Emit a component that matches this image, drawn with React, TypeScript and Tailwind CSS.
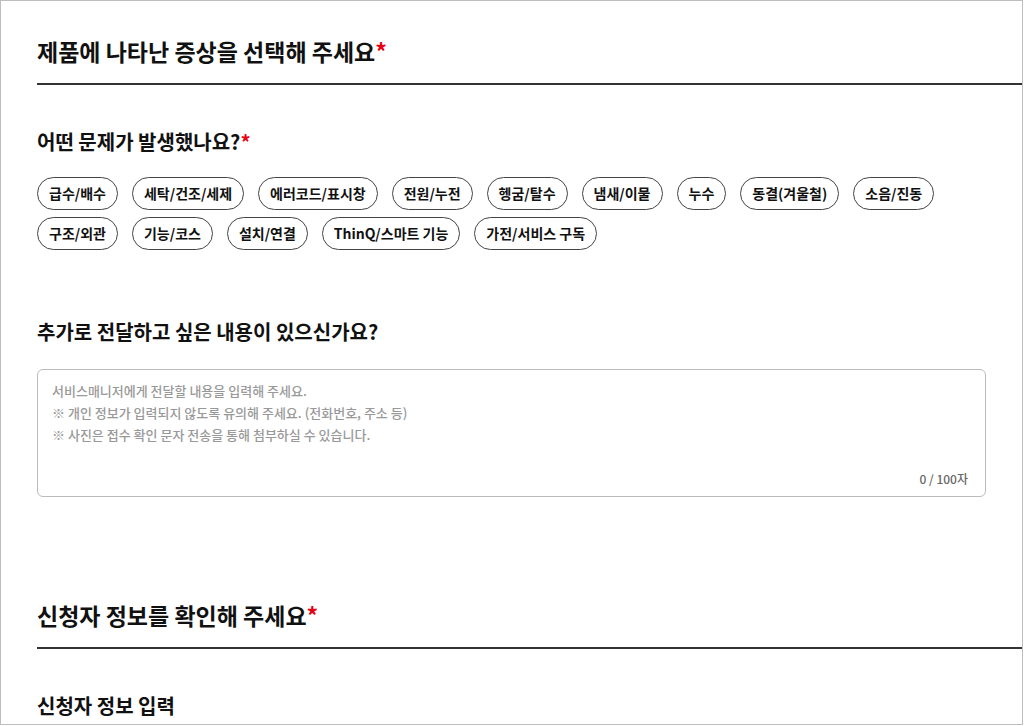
import React from "react";

const symptoms = [
  "급수/배수",
  "세탁/건조/세제",
  "에러코드/표시창",
  "전원/누전",
  "헹굼/탈수",
  "냄새/이물",
  "누수",
  "동결(겨울철)",
  "소음/진동",
  "구조/외관",
  "기능/코스",
  "설치/연결",
  "ThinQ/스마트 기능",
  "가전/서비스 구독",
];

function Star() {
  return <span className="text-[#e60012]">*</span>;
}

function SectionTitle({ children }: { children: React.ReactNode }) {
  return (
    <div className="border-b-2 border-[#333] pb-[17px]">
      <h2 className="text-[23px] leading-[30px] font-bold text-[#111]">
        {children}
        <Star />
      </h2>
    </div>
  );
}

function App() {
  return (
    <div
      className="w-[1023px] h-[725px] overflow-hidden border border-[#bdbdbd] bg-white pl-[36px] pt-[35px] text-[#111]"
      style={{ fontFamily: '"Noto Sans CJK KR", "Noto Sans", sans-serif' }}
    >
      <SectionTitle>제품에 나타난 증상을 선택해 주세요</SectionTitle>

      <section className="pr-[36px]">
        <h3 className="mt-[44px] text-[20px] leading-[26px] font-bold">
          어떤 문제가 발생했나요?
          <Star />
        </h3>
        <div className="mt-[22px] flex flex-wrap gap-x-[14px] gap-y-[7px]">
          {symptoms.map((s) => (
            <button
              key={s}
              className="rounded-full border border-[#444] bg-white px-[11px] py-[6px] text-[14px] leading-[19px] font-bold text-[#111]"
            >
              {s}
            </button>
          ))}
        </div>

        <h3 className="mt-[69px] text-[20px] leading-[26px] font-bold">
          추가로 전달하고 싶은 내용이 있으신가요?
        </h3>
        <div className="mt-[24px] h-[128px] rounded-[6px] border border-[#bbb] flex flex-col pl-[14px] pr-[17px] pt-[10px] pb-[8px]">
          <textarea
            className="flex-1 resize-none outline-none text-[13px] leading-[22px] font-medium text-[#333] placeholder:text-[#999]"
            placeholder={
              "서비스매니저에게 전달할 내용을 입력해 주세요.\n※ 개인 정보가 입력되지 않도록 유의해 주세요. (전화번호, 주소 등)\n※ 사진은 접수 확인 문자 전송을 통해 첨부하실 수 있습니다."
            }
          />
          <div className="flex justify-end text-[12px] leading-[18px] font-medium text-[#666]">
            0 / 100자
          </div>
        </div>
      </section>

      <div className="mt-[103px]">
        <SectionTitle>신청자 정보를 확인해 주세요</SectionTitle>
      </div>

      <h3 className="mt-[44px] text-[20px] leading-[26px] font-bold">
        신청자 정보 입력
      </h3>
    </div>
  );
}

export default App;
